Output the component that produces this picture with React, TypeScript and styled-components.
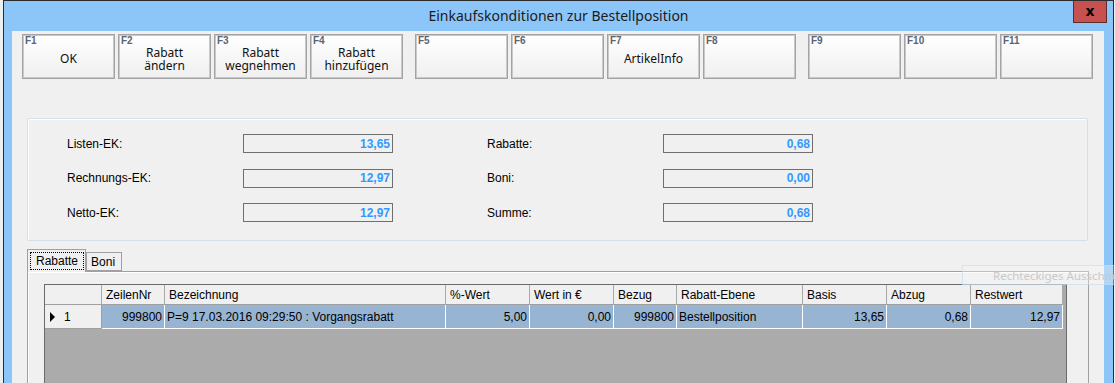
import React from 'react'
import styled, { createGlobalStyle } from 'styled-components'

const GlobalStyle = createGlobalStyle`
    html, body {
        margin: 0;
        padding: 0;
        background: #eeeeee;
    }
    body {
        font-family: 'Liberation Sans', Arial, sans-serif;
        font-size: 12px;
        color: #000;
    }
    * {
        box-sizing: border-box;
    }
`

const Screen = styled.div`
    position: relative;
    width: 1115px;
    height: 383px;
    overflow: hidden;
    padding-left: 3px;
    background: #eeeeee;
`

const Window = styled.div`
    width: 1111px;
    height: 420px;
    border: 1px solid #2c2c2c;
    background: #8cc6f9;
    display: flex;
    flex-direction: column;
`

const TitleBar = styled.div`
    flex-shrink: 0;
    height: 30px;
    display: grid;
    grid-template-columns: 1fr auto 1fr;
    align-items: start;
`

const Title = styled.div`
    grid-column: 2;
    padding-top: 5px;
    font-family: 'Noto Sans', 'Open Sans', sans-serif;
    font-size: 14px;
    color: #1b1b1b;
`

const CloseButton = styled.div`
    grid-column: 3;
    justify-self: end;
    margin-right: 6px;
    width: 34px;
    height: 22px;
    background: #c75050;
    border: 1px solid #5c2d2d;
    border-top: none;
    display: flex;
    align-items: center;
    justify-content: center;
    font-family: 'DejaVu Sans', sans-serif;
    font-weight: bold;
    font-size: 14px;
    line-height: 1;
    padding-bottom: 2px;
    color: #000;
`

const Client = styled.div`
    flex: 1;
    min-height: 0;
    overflow: hidden;
    margin: 0 9px 0 8px;
    background: #f0f0f0;
    display: flex;
    flex-direction: column;
    > * {
        flex-shrink: 0;
    }
`

const ButtonBar = styled.div`
    display: flex;
    gap: 12px;
    padding: 3px 0 0 10px;
`

const ButtonGroup = styled.div`
    display: flex;
    gap: 3px;
`

const FButton = styled.div`
    position: relative;
    width: 93px;
    height: 45px;
    border: 1px solid #a3a3a3;
    box-shadow: inset 0 0 0 1px #c9c9c9;
    background: linear-gradient(#ffffff, #efefef);
    display: flex;
    align-items: center;
    justify-content: center;
    text-align: center;
    padding-top: 4px;
    font-family: 'Noto Sans', 'Open Sans', sans-serif;
    font-size: 12px;
    line-height: 13px;
    color: #111;
`

const ButtonLabel = styled.span`
    white-space: pre-line;
`

const FKey = styled.span`
    position: absolute;
    top: 1px;
    left: 2px;
    font-family: 'Liberation Sans', Arial, sans-serif;
    font-weight: bold;
    font-size: 10px;
    line-height: 9px;
    color: #5b6470;
`

const GroupBox = styled.div`
    margin: 39px 0 0 15px;
    width: 1061px;
    height: 123px;
    border: 1px solid #d5dfe5;
    border-radius: 2px;
    box-shadow: inset 1px 1px 0 #ffffff;
    display: grid;
    grid-template-columns: 176px 150px 94px 176px 150px;
    grid-auto-rows: 19px;
    row-gap: 15.5px;
    padding: 15px 0 0 39px;
`

const FieldLabel = styled.div`
    display: flex;
    align-items: center;
`

const ValueBox = styled.div`
    border: 1px solid #6f6f6f;
    background: #f0f0f0;
    display: flex;
    align-items: center;
    justify-content: flex-end;
    padding-right: 2px;
    font-weight: bold;
    color: #3399ff;
`

const Spacer = styled.div``

const TabStrip = styled.div`
    margin: 8px 0 0 15px;
    height: 22px;
    display: flex;
    align-items: flex-end;
    position: relative;
    z-index: 1;
`

const Tab = styled.div<{ $active?: boolean }>`
    height: ${p => (p.$active ? '23px' : '19px')};
    margin-bottom: ${p => (p.$active ? '-1px' : '0')};
    padding: ${p => (p.$active ? '2px 1px 2px 2px' : '2px 6px 0 4px')};
    border: 1px solid #a0a0a0;
    border-bottom: ${p => (p.$active ? 'none' : '1px solid #a0a0a0')};
    background: #f0f0f0;
    display: flex;
    font-size: 12px;
`

const FocusBox = styled.span`
    border: 1px dotted #000;
    padding: 1px 5px 2px 5px;
    line-height: 15px;
`

const TabPanel = styled.div`
    margin-left: 15px;
    width: 1062px;
    height: 200px;
    border: 1px solid #a0a0a0;
    box-shadow: inset 1px 1px 0 #ffffff;
    background: #f0f0f0;
    padding: 12px 0 0 16px;
`

const Grid = styled.div`
    width: 1023px;
    height: 200px;
    border: 1px solid #6a6a6a;
    background: #ababab;
`

const Row = styled.div<{ $height: number }>`
    display: flex;
    height: ${p => p.$height}px;
`

const HeaderCell = styled.div<{ $width: number }>`
    width: ${p => p.$width}px;
    background: #f0f0f0;
    border-right: 1px solid #a8a8a8;
    border-bottom: 1px solid #a0a0a0;
    padding: 0 4px;
    display: flex;
    align-items: center;
    white-space: nowrap;
    overflow: hidden;
`

const DataCell = styled.div<{ $width: number; $right?: boolean }>`
    width: ${p => p.$width}px;
    background: #98b4d3;
    border-right: 1px solid #ffffff;
    border-bottom: 1px solid #ffffff;
    padding: 0 2px;
    display: flex;
    align-items: center;
    justify-content: ${p => (p.$right ? 'flex-end' : 'flex-start')};
    white-space: nowrap;
    overflow: hidden;
`

const RowHeader = styled.div<{ $width: number }>`
    width: ${p => p.$width}px;
    background: #f0f0f0;
    border-right: 1px solid #a0a0a0;
    border-bottom: 1px solid #a0a0a0;
    display: flex;
    align-items: center;
    padding-left: 5px;
    gap: 9px;
`

const RowArrow = styled.span`
    width: 0;
    height: 0;
    border-top: 5px solid transparent;
    border-bottom: 5px solid transparent;
    border-left: 5px solid #000;
`

const GhostTip = styled.div`
    position: absolute;
    left: 962px;
    top: 265px;
    width: 153px;
    height: 20px;
    overflow: hidden;
    border: 1px solid rgba(190, 215, 235, 0.55);
    border-right: none;
    background: rgba(245, 245, 245, 0.35);
    padding-left: 30px;
    display: flex;
    align-items: center;
    font-family: 'Noto Sans', 'Open Sans', sans-serif;
    font-size: 11.5px;
    color: #c9c9c9;
    white-space: nowrap;
`

const columns = [
    { title: 'ZeilenNr', width: 63, value: '999800', right: true },
    { title: 'Bezeichnung', width: 281, value: 'P=9 17.03.2016 09:29:50 : Vorgangsrabatt' },
    { title: '%-Wert', width: 84, value: '5,00', right: true },
    { title: 'Wert in €', width: 84, value: '0,00', right: true },
    { title: 'Bezug', width: 63, value: '999800', right: true },
    { title: 'Rabatt-Ebene', width: 126, value: 'Bestellposition' },
    { title: 'Basis', width: 84, value: '13,65', right: true },
    { title: 'Abzug', width: 84, value: '0,68', right: true },
    { title: 'Restwert', width: 92, value: '12,97', right: true },
]

const buttonGroups = [
    [
        { key: 'F1', label: 'OK' },
        { key: 'F2', label: 'Rabatt\nändern' },
        { key: 'F3', label: 'Rabatt\nwegnehmen' },
        { key: 'F4', label: 'Rabatt\nhinzufügen' },
    ],
    [
        { key: 'F5', label: '' },
        { key: 'F6', label: '' },
        { key: 'F7', label: 'ArtikelInfo' },
        { key: 'F8', label: '' },
    ],
    [
        { key: 'F9', label: '' },
        { key: 'F10', label: '' },
        { key: 'F11', label: '' },
    ],
]

const summary = [
    ['Listen-EK:', '13,65', 'Rabatte:', '0,68'],
    ['Rechnungs-EK:', '12,97', 'Boni:', '0,00'],
    ['Netto-EK:', '12,97', 'Summe:', '0,68'],
]

const App: React.FC = () => {
    return (
        <Screen>
            <GlobalStyle />
            <Window>
                <TitleBar>
                    <Title>Einkaufskonditionen zur Bestellposition</Title>
                    <CloseButton>x</CloseButton>
                </TitleBar>
                <Client>
                    <ButtonBar>
                        {buttonGroups.map((group, gi) => (
                            <ButtonGroup key={gi}>
                                {group.map(btn => (
                                    <FButton key={btn.key}>
                                        <FKey>{btn.key}</FKey>
                                        <ButtonLabel>{btn.label}</ButtonLabel>
                                    </FButton>
                                ))}
                            </ButtonGroup>
                        ))}
                    </ButtonBar>

                    <GroupBox>
                        {summary.map(row => (
                            <React.Fragment key={row[0]}>
                                <FieldLabel>{row[0]}</FieldLabel>
                                <ValueBox>{row[1]}</ValueBox>
                                <Spacer />
                                <FieldLabel>{row[2]}</FieldLabel>
                                <ValueBox>{row[3]}</ValueBox>
                            </React.Fragment>
                        ))}
                    </GroupBox>

                    <TabStrip>
                        <Tab $active>
                            <FocusBox>Rabatte</FocusBox>
                        </Tab>
                        <Tab>Boni</Tab>
                    </TabStrip>
                    <TabPanel>
                        <Grid>
                            <Row $height={20}>
                                <HeaderCell $width={57} />
                                {columns.map(col => (
                                    <HeaderCell key={col.title} $width={col.width}>
                                        {col.title}
                                    </HeaderCell>
                                ))}
                            </Row>
                            <Row $height={24}>
                                <RowHeader $width={57}>
                                    <RowArrow />
                                    <span>1</span>
                                </RowHeader>
                                {columns.map(col => (
                                    <DataCell key={col.title} $width={col.width} $right={col.right}>
                                        {col.value}
                                    </DataCell>
                                ))}
                            </Row>
                        </Grid>
                    </TabPanel>
                </Client>
            </Window>
            <GhostTip>Rechteckiges Ausschneiden</GhostTip>
        </Screen>
    )
}

export default App
